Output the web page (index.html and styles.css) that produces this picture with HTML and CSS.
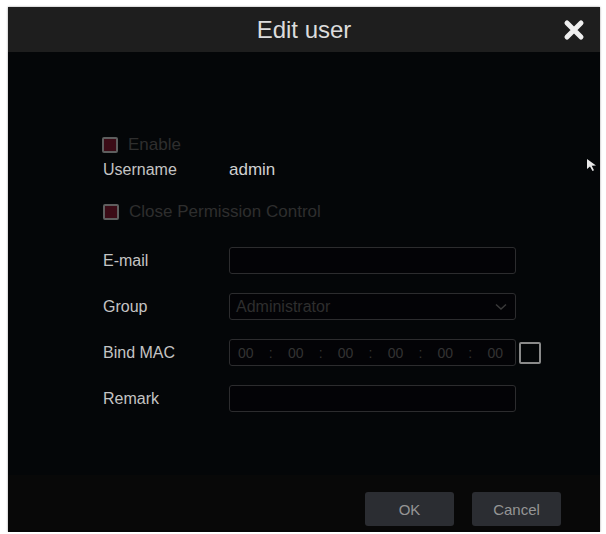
FILE: index.html
```html
<!DOCTYPE html>
<html lang="en">
<head>
    <meta charset="UTF-8">
    <title>Edit user</title>
    <link rel="stylesheet" href="styles.css">
</head>
<body>
    <div class="dialog">
        <div class="dialog-title">
            <span>Edit user</span>
            <svg class="close" width="22" height="22" viewBox="0 0 22 22"><path d="M4 4 L18 18 M18 4 L4 18" stroke="#efefef" stroke-width="5" stroke-linecap="round"/></svg>
        </div>
        <div class="dialog-body">
            <div class="row row-enable">
                <span class="check checked"></span>
                <span class="dim">Enable</span>
            </div>
            <div class="row row-user">
                <span class="label">Username</span>
                <span class="value">admin</span>
            </div>
            <div class="row row-perm">
                <span class="check checked"></span>
                <span class="dim">Close Permission Control</span>
            </div>
            <div class="row field-row first">
                <span class="label">E-mail</span>
                <div class="input"></div>
            </div>
            <div class="row field-row">
                <span class="label">Group</span>
                <div class="input select">
                    <span class="dim">Administrator</span>
                    <svg class="chevron" width="12" height="8" viewBox="0 0 12 8"><path d="M1 1.5 L6 6 L11 1.5" fill="none" stroke="#3a3a3a" stroke-width="1.5"/></svg>
                </div>
            </div>
            <div class="row field-row">
                <span class="label">Bind MAC</span>
                <div class="input mac">
                    <span>00</span><i>:</i><span>00</span><i>:</i><span>00</span><i>:</i><span>00</span><i>:</i><span>00</span><i>:</i><span>00</span>
                </div>
                <span class="mac-check"></span>
            </div>
            <div class="row field-row">
                <span class="label">Remark</span>
                <div class="input"></div>
            </div>
            <svg class="cursor" width="12" height="14" viewBox="0 0 12 14"><path d="M1 1 L1 11 L4 8.5 L6.5 13 L8 12.2 L5.7 7.8 L10 7.5 Z" fill="#e8e8e8"/></svg>
        </div>
        <div class="dialog-footer">
            <button class="btn">OK</button>
            <button class="btn">Cancel</button>
        </div>
    </div>
</body>
</html>
```

FILE: styles.css
```css
body {
    margin: 0;
    background-color: #ffffff;
    font-family: 'Liberation Sans', Arial, sans-serif;
}

.dialog {
    margin: 7px 6px 0 8px;
    width: 592px;
    height: 525px;
    background-color: #040608;
    display: flex;
    flex-direction: column;
    box-shadow: 0 0 2px rgba(0, 0, 0, 0.4);
}

.dialog-title {
    position: relative;
    height: 45px;
    flex-shrink: 0;
    background-color: #1e1e1e;
    color: #dcdcdc;
    font-size: 24px;
    display: flex;
    align-items: center;
    justify-content: center;
}

.close {
    position: absolute;
    right: 15px;
    top: 12px;
}

.dialog-body {
    position: relative;
    flex: 1;
    padding-left: 95px;
    padding-top: 85px;
}

.row {
    display: flex;
    align-items: center;
    font-size: 16px;
    color: #c4c4c4;
}

.row-enable,
.row-perm {
    height: 16px;
}

.row-user {
    margin-top: 7px;
    height: 20px;
}

.row-perm {
    margin-top: 24px;
}

.row-enable .check {
    margin-left: -1px;
}

.check {
    width: 12px;
    height: 12px;
    border: 2px solid #5e5e5e;
    border-radius: 2px;
    margin-right: 10px;
    flex-shrink: 0;
}

.check.checked {
    background-color: #3b0b16;
}

.dim {
    color: #2e2e2e;
}

.row-perm .dim,
.row-enable .dim {
    font-size: 17px;
}

.label {
    width: 126px;
}

.value {
    color: #d0d0d0;
    font-size: 17px;
}

.field-row {
    margin-top: 19px;
}

.field-row.first {
    margin-top: 27px;
}

.input {
    width: 285px;
    height: 25px;
    border: 1px solid #2c2c2e;
    border-radius: 3px;
    background-color: #030306;
    display: flex;
    align-items: center;
}

.select {
    justify-content: space-between;
}

.select .dim {
    padding-left: 6px;
}

.chevron {
    margin-right: 8px;
}

.mac {
    color: #333333;
    font-size: 14px;
    padding: 0 12px 0 8px;
    width: 265px;
    justify-content: space-between;
}

.mac i {
    font-style: normal;
}

.mac-check {
    width: 18px;
    height: 18px;
    border: 2px solid #8a8a8a;
    border-radius: 2px;
    margin-left: 3px;
}

.cursor {
    position: absolute;
    left: 578px;
    top: 106px;
}

.dialog-footer {
    height: 57px;
    background-color: #080808;
    display: flex;
    justify-content: flex-end;
    align-items: flex-end;
    gap: 18px;
    padding: 0 39px 6px 0;
    box-sizing: border-box;
}

.btn {
    width: 89px;
    height: 34px;
    border: none;
    border-radius: 3px;
    background-color: #2b2d32;
    color: #959595;
    font-family: 'Liberation Sans', Arial, sans-serif;
    font-size: 15px;
}
```
